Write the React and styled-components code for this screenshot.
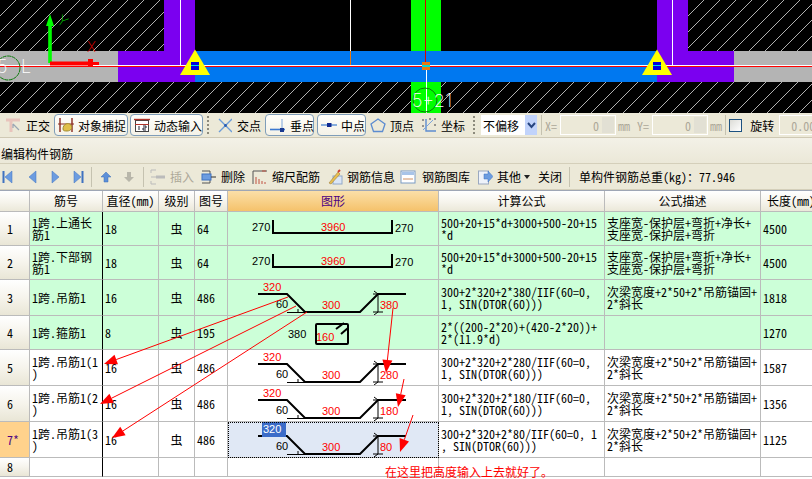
import React from "react";
import styled, { createGlobalStyle } from "styled-components";

const FONT = `"Noto Sans Mono CJK SC", "Noto Sans CJK SC", "Liberation Mono", monospace`;

const Global = createGlobalStyle`
  html, body { margin: 0; padding: 0; background: #fff; }
  body { font-family: ${FONT}; font-size: 12px; color: #000; }
`;

const Page = styled.div`
  position: relative;
  width: 812px;
  height: 479px;
  overflow: hidden;
  background: #fff;
`;

const CanvasSvg = styled.svg`
  display: block;
  width: 812px;
  height: 113px;
  background: #000;
`;

const CadLabel = styled.text`
  font-family: Inter, "Liberation Sans", sans-serif;
  font-weight: 200;
  font-size: 18px;
  fill: #fff;
`;

const AxisLabel = styled.text`
  font-family: Inter, "Liberation Sans", sans-serif;
  font-weight: 200;
  font-size: 14px;
  fill: ${(p) => p.$c};
`;

const Bar = styled.div`
  display: flex;
  align-items: center;
  height: ${(p) => p.$h}px;
  box-sizing: border-box;
  background: #ece9d8;
  border-bottom: 1px solid ${(p) => p.$line || "#d8d2bd"};
  white-space: nowrap;
  overflow: hidden;
`;

const TitleBar = styled(Bar)`
  background: linear-gradient(#f3f1e7, #ebe8d8);
  padding: 6px 0 0 1px;
  font-size: 12px;
`;

const Tool = styled.div`
  display: flex;
  flex: none;
  align-items: center;
  gap: ${(p) => p.$gap ?? 5}px;
  margin-left: ${(p) => p.$ml || 0}px;
  color: ${(p) => (p.$off ? "#aca899" : "#000")};
`;

const Toggle = styled.div`
  display: flex;
  flex: none;
  align-items: center;
  gap: 4px;
  box-sizing: border-box;
  width: ${(p) => p.$w}px;
  height: 22px;
  margin-left: ${(p) => p.$ml || 0}px;
  padding-left: 3px;
  background: linear-gradient(#fffefa, #f4f2e8);
  border: 1px solid #7f9db9;
  border-radius: 4px;
`;

const Grip = styled.div`
  flex: none;
  width: 2px;
  height: 19px;
  margin-left: ${(p) => p.$ml || 0}px;
  background-image: repeating-linear-gradient(#8c8a7c 0 2px, transparent 2px 4px);
`;

const Sep = styled.div`
  flex: none;
  width: 1px;
  height: 20px;
  margin-left: ${(p) => p.$ml || 0}px;
  background: #c5c2b0;
`;

const Select = styled.div`
  display: flex;
  flex: none;
  justify-content: space-between;
  align-items: center;
  box-sizing: border-box;
  width: 56px;
  height: 20px;
  margin-left: ${(p) => p.$ml}px;
  padding-left: 2px;
  background: #fff;
`;

const SelectBtn = styled.div`
  display: flex;
  align-items: center;
  justify-content: center;
  width: 12px;
  height: 20px;
  background: #c1d3fb;
`;

const Faint = styled.span`
  flex: none;
  margin-left: ${(p) => p.$ml || 0}px;
  color: #aca899;
`;

const Spin = styled.div`
  display: flex;
  flex: none;
  justify-content: flex-end;
  align-items: center;
  box-sizing: border-box;
  width: ${(p) => p.$w}px;
  height: 20px;
  margin-left: ${(p) => p.$ml || 0}px;
  padding-right: 1px;
  gap: 3px;
  color: #aca899;
  background: #ece9d8;
  border: 1px solid #fff;
`;

const SpinBtn = styled.div`
  width: 12px;
  height: 16px;
  background: #e2e0d4;
`;

const Check = styled.div`
  flex: none;
  box-sizing: border-box;
  width: 13px;
  height: 13px;
  margin-left: ${(p) => p.$ml}px;
  border: 1px solid #1c5180;
  background: linear-gradient(135deg, #dcdcd7, #fff);
`;

const Sheet = styled.div`
  border-top: 1px solid #9ea6b5;
`;

const Row = styled.div`
  display: grid;
  grid-template-columns: 30px 73px 56px 36px 33px 211px 166px 156px 61px;
  height: ${(p) => p.$h}px;
  background: ${(p) => p.$bg || "#fff"};
`;

const Cell = styled.div`
  display: flex;
  align-items: center;
  justify-content: ${(p) => (p.$center ? "center" : "flex-start")};
  box-sizing: border-box;
  min-width: 0;
  padding-left: ${(p) => (p.$center ? 0 : 2)}px;
  border-right: 1px solid #bbb;
  border-bottom: 1px solid #bbb;
  white-space: pre;
  line-height: 12px;
  overflow: hidden;
`;

const NameCell = styled(Cell)`
  border-right-color: #000;
`;

const HeadCell = styled(Cell)`
  justify-content: center;
  padding: 0;
  background: linear-gradient(#fff, #f6f4ec 55%, #ebe8d9);
`;

const HeadShape = styled(HeadCell)`
  color: #4b0082;
  background: linear-gradient(#fbdfa8, #f5c26b);
`;

const RowHead = styled(Cell)`
  padding-left: 7px;
  color: ${(p) => (p.$sel ? "#4b0082" : "#000")};
  background: ${(p) => (p.$sel ? "#ffd28c" : "linear-gradient(#fff, #f6f4ec 50%, #e9e6d6)")};
`;

const ShapeCell = styled(Cell)`
  padding: 0;
  align-items: flex-start;
  background: ${(p) => (p.$sel ? "#e0e8f5" : "transparent")};
  outline: ${(p) => (p.$sel ? "1px dotted #000" : "none")};
  outline-offset: -1px;
`;

const Figure = styled.svg`
  display: block;
  flex: none;
  font-family: "Liberation Sans", sans-serif;
  font-size: 11px;
`;

const Overlay = styled.svg`
  position: absolute;
  left: 0;
  top: 0;
  width: 812px;
  height: 479px;
  pointer-events: none;
`;

const Note = styled.div`
  position: absolute;
  left: 385px;
  top: 465px;
  color: #f00;
  white-space: nowrap;
  line-height: 14px;
`;

const Ico = ({ w = 16, h = 16, children }) => (
  <svg width={w} height={h} viewBox={`0 0 ${w} ${h}`} style={{ flex: "none", display: "block" }}>
    {children}
  </svg>
);

const hatchOk = "url(#hatch)";

function Canvas() {
  return (
    <CanvasSvg viewBox="0 0 812 113">
      <defs>
        <pattern id="hatch" width="16" height="16" patternUnits="userSpaceOnUse">
          <path d="M-2 2 L2 -2 M0 16 L16 0 M14 18 L18 14" stroke="#c4c4c4" strokeWidth="0.9" />
        </pattern>
      </defs>
      <rect x="0" y="0" width="164" height="51" fill={hatchOk} />
      <rect x="688" y="0" width="124" height="51" fill={hatchOk} />
      <rect x="0" y="82" width="812" height="31" fill={hatchOk} />
      <rect x="411" y="0" width="30" height="113" fill="#0f0" />
      <rect x="0" y="51" width="118" height="31" fill="#b4b4b4" />
      <rect x="734" y="51" width="78" height="31" fill="#b4b4b4" />
      <path d="M164 0H195V82H118V51H164Z" fill="#7b00f0" />
      <path d="M657 0H688V51H734V82H657Z" fill="#7b00f0" />
      <rect x="195" y="51" width="462" height="31" fill="#0078f0" />
      <path d="M180.5 0V65M350.5 0V51M672.5 0V65M426.5 66V113" stroke="#fff" strokeWidth="1" />
      <path d="M350.5 51V65" stroke="#e87810" strokeWidth="1" />
      <path d="M0 65.5H812" stroke="#fff" strokeWidth="1" />
      <path d="M0 66.5H812" stroke="#f00" strokeWidth="1.2" />
      <path d="M425.5 0V62" stroke="#d00" strokeWidth="1" />
      <rect x="422" y="62" width="8" height="8" fill="#e87810" />
      <rect x="422" y="65" width="8" height="2" fill="#00d8d8" />
      <polygon points="195,49.5 180,75 210,75" fill="#ff0" />
      <polygon points="657,49.5 642,75 672,75" fill="#ff0" />
      <rect x="191" y="62" width="8" height="8" fill="#0000e0" />
      <rect x="653" y="62" width="8" height="8" fill="#0000e0" />
      <path d="M191 65.5H199M653 65.5H661" stroke="#00e0e0" strokeWidth="1" />
      <rect x="48.2" y="24" width="3.6" height="39" fill="#0f0" />
      <polygon points="50,14 46,26 54,26" fill="#0f0" />
      <polygon points="50,61.5 88,61.5 88,59 93,59 93,62 99,62 99,65 93,65 93,67 88,67 88,65.5 50,65.5" fill="#f00" />
      <AxisLabel x="58" y="26" $c="#00d000" transform="rotate(35 63 21)">Y</AxisLabel>
      <AxisLabel x="87" y="52" $c="#e00000">X</AxisLabel>
      <circle cx="8" cy="68" r="12" fill="none" stroke="#0a7a0a" strokeWidth="1" strokeDasharray="4 0.6" />
      <circle cx="425" cy="100" r="12" fill="none" stroke="#0a7a0a" strokeWidth="1" />
      <CadLabel x="-3" y="72.5">5</CadLabel>
      <CadLabel x="21" y="72.5">L</CadLabel>
      <CadLabel x="412" y="106.5" textLength="40">5+21</CadLabel>
    </CanvasSvg>
  );
}

function Toolbar() {
  return (
    <Bar $h={25} $line="#cfc9b4">
      <Tool $ml={5}>
        <Ico>
          <path d="M1 3H15M6 3V15" stroke="#e8c4bc" strokeWidth="3" />
          <path d="M8 7L14 13M8 7V11" stroke="#9aa6b4" strokeWidth="1.2" />
        </Ico>
        正交
      </Tool>
      <Toggle $w={74} $ml={4}>
        <Ico>
          <path d="M2 1V15M14 1V15" stroke="#8a2a1e" strokeWidth="1.4" />
          <path d="M0 7H16" stroke="#8a2a1e" />
          <path d="M5 12C5 7 10 5 13 8C15 11 13 14 9 14C7 14 5 14 5 12Z" fill="#e0c04a" stroke="#a08a30" />
        </Ico>
        对象捕捉
      </Toggle>
      <Toggle $w={73} $ml={2}>
        <Ico>
          <rect x="1.5" y="3.5" width="13" height="11" fill="#fff" stroke="#444" />
          <path d="M0 2.5H16" stroke="#b0332a" strokeWidth="1.4" />
          <path d="M1 7.5H15" stroke="#b0332a" />
          <path d="M5 9V13M9 9H12V11H9V13H12" stroke="#223" fill="none" />
        </Ico>
        动态输入
      </Toggle>
      <Grip $ml={4} />
      <Tool $ml={9}>
        <Ico w={14}>
          <path d="M1 2L14 15M14 2L1 15" stroke="#6c9cd8" strokeWidth="1.4" />
          <circle cx="7.5" cy="8.5" r="1.4" fill="#2a5cb0" />
        </Ico>
        交点
      </Tool>
      <Toggle $w={49} $ml={4}>
        <Ico w={17}>
          <path d="M1 12.5H16" stroke="#3c78d0" strokeWidth="1.6" />
          <path d="M13 2V15" stroke="#7aa4dc" />
          <rect x="11" y="11" width="4" height="4" fill="#1a3a90" />
        </Ico>
        垂点
      </Toggle>
      <Toggle $w={49} $ml={3}>
        <Ico>
          <path d="M0 8H16" stroke="#6c9cd8" strokeWidth="1.6" />
          <rect x="6" y="6" width="4.5" height="4" fill="#102a90" />
        </Ico>
        中点
      </Toggle>
      <Tool $ml={4} $gap={4}>
        <Ico>
          <polygon points="8,2 15,7 12.5,14.5 3.5,14.5 1,7" fill="none" stroke="#5c8cd0" strokeWidth="1.3" />
        </Ico>
        顶点
      </Tool>
      <Tool $ml={7} $gap={4}>
        <Ico>
          <path d="M5 2V14H15" stroke="#5c8cd0" strokeWidth="1.4" fill="none" />
          <path d="M2 13L12 3" stroke="#7aa4dc" />
          <path d="M1 3H3M8 2H10M13 2H15M1 9H3M13 8H15" stroke="#777" strokeWidth="1.5" />
        </Ico>
        坐标
      </Tool>
      <Grip $ml={8} />
      <Select $ml={6}>
        不偏移
        <SelectBtn>
          <Ico w={9} h={7}>
            <path d="M1 1L4.5 5L8 1" fill="none" stroke="#27457f" strokeWidth="2" />
          </Ico>
        </SelectBtn>
      </Select>
      <Sep $ml={4} />
      <Faint $ml={3}>X=</Faint>
      <Spin $w={56} $ml={3}>
        0<SpinBtn />
      </Spin>
      <Faint $ml={2}>mm</Faint>
      <Faint $ml={7}>Y=</Faint>
      <Spin $w={56} $ml={3}>
        0<SpinBtn />
      </Spin>
      <Faint $ml={2}>mm</Faint>
      <Sep $ml={3} />
      <Check $ml={3} />
      <Tool $ml={8}>旋转</Tool>
      <Spin $w={50} $ml={5}>
        0.0000
      </Spin>
    </Bar>
  );
}

const Nav = ({ last, first, flip }) => (
  <Ico w={11} h={14}>
    <g transform={flip ? "translate(11 0) scale(-1 1)" : undefined}>
      <polygon points={first ? "10,1 3,7 10,13" : "9,1 2,7 9,13"} fill="#6c9ce0" stroke="#3f72c0" strokeWidth="0.5" />
      {last && <rect x="0.5" y="1" width="2" height="12" fill="#3f72c0" />}
    </g>
  </Ico>
);

function Editbar() {
  return (
    <Bar $h={26} $line="#d4cfba">
      <Tool $ml={2} $gap={0}>
        <Nav last first />
      </Tool>
      <Tool $ml={14} $gap={0}>
        <Nav />
      </Tool>
      <Tool $ml={12} $gap={0}>
        <Nav flip />
      </Tool>
      <Tool $ml={12} $gap={0}>
        <Nav last first flip />
      </Tool>
      <Sep $ml={7} />
      <Tool $ml={8} $gap={0}>
        <Ico w={12} h={12}>
          <path d="M6 1L11 6H8V11H4V6H1Z" fill="#5c8fd8" stroke="#3a6cb8" strokeWidth="0.5" />
        </Ico>
      </Tool>
      <Tool $ml={11} $gap={0}>
        <Ico w={12} h={12}>
          <path d="M6 11L11 6H8V1H4V6H1Z" fill="#b8b6aa" />
        </Ico>
      </Tool>
      <Sep $ml={8} />
      <Tool $ml={6} $gap={4} $off>
        <Ico>
          <path d="M1 1H6M1 8H6M1 15H6M1 1V4M1 12V15" stroke="#bbb" fill="none" />
          <path d="M6 8H15" stroke="#bbb" strokeWidth="3" />
        </Ico>
        插入
      </Tool>
      <Tool $ml={7} $gap={4}>
        <Ico>
          <path d="M1 2H9M1 14H9M9 2V5M9 11V14" stroke="#555" fill="none" />
          <rect x="1" y="5" width="9" height="6" fill="#6c9ce0" stroke="#3f72c0" />
          <path d="M10 8H15" stroke="#333" />
        </Ico>
        删除
      </Tool>
      <Tool $ml={7} $gap={4}>
        <Ico>
          <path d="M1 15V2H15" stroke="#555" fill="none" />
          <path d="M10 2L14 2M4 15V8M7 15V10M10 15V12M13 15V13" stroke="#c05040" />
        </Ico>
        缩尺配筋
      </Tool>
      <Tool $ml={7} $gap={4}>
        <Ico>
          <rect x="6" y="7" width="9" height="8" fill="#dbe6f6" stroke="#90a8c8" />
          <path d="M2 14L11 3L13 5L4 15Z" fill="#e8c050" stroke="#a08040" strokeWidth="0.6" />
          <path d="M11 3L13 1" stroke="#d04030" strokeWidth="2" />
        </Ico>
        钢筋信息
      </Tool>
      <Tool $ml={5} $gap={6}>
        <Ico>
          <rect x="1" y="2" width="14" height="12" fill="#fff" stroke="#7a9cc4" />
          <rect x="2" y="3" width="12" height="3" fill="#a8c4e8" />
          <path d="M3 10H13" stroke="#d09060" />
        </Ico>
        钢筋图库
      </Tool>
      <Tool $ml={7} $gap={4}>
        <Ico>
          <rect x="1.5" y="2" width="10" height="13" fill="#eef2fa" stroke="#9aa8c0" />
          <path d="M7 5H11V2L16 7.5L11 13V10H7Z" fill="#6c9ce0" stroke="#3f72c0" strokeWidth="0.5" />
        </Ico>
        其他
      </Tool>
      <Tool $ml={3} $gap={0}>
        <Ico w={6} h={4}>
          <polygon points="0,0 6,0 3,4" fill="#222" />
        </Ico>
      </Tool>
      <Tool $ml={8}>关闭</Tool>
      <Sep $ml={7} />
      <Tool $ml={9}>单构件钢筋总重(kg)：77.946</Tool>
    </Bar>
  );
}

function Rod({ left, mid, right }) {
  return (
    <Figure width="210" height="33" viewBox="1 0 210 33">
      <path d="M46 8V21H165V8" fill="none" stroke="#000" strokeWidth="2" />
      <text x="25" y="19">{left}</text>
      <text x="94" y="19" fill="#f00">{mid}</text>
      <text x="168" y="20">{right}</text>
    </Figure>
  );
}

function Stirrup() {
  return (
    <Figure width="210" height="33" viewBox="1 0 210 33">
      <rect x="89" y="8" width="32" height="20" fill="none" stroke="#000" strokeWidth="2" rx="1" />
      <path d="M109 13L117 7M114 18L121 12" stroke="#000" strokeWidth="2" />
      <text x="61" y="22">380</text>
      <text x="89" y="25" fill="#f00">160</text>
    </Figure>
  );
}

function Hanger({ value, sel }) {
  return (
    <Figure width="210" height="35" viewBox="1 0 210 35">
      <path d="M31 14H60L78 32H133L151 14H179" fill="none" stroke="#000" strokeWidth="2" />
      <path d="M60 32.5H78M71 29V32M146 14H156M146 32H156M151 14V32M147 11L151 14M147 35L151 32" stroke="#000" strokeWidth="1" fill="none" />
      {sel && <rect x="35" y="0" width="24" height="15" fill="#3c6cc8" />}
      <text x="36" y="11" fill={sel ? "#fff" : "#f00"}>320</text>
      <text x="49" y="28">60</text>
      <text x="95" y="29" fill="#f00">300</text>
      <text x="153" y="29" fill="#f00">{value}</text>
    </Figure>
  );
}

const BAR = "虫";
const DESC = "次梁宽度+2*50+2*吊筋锚固+\n2*斜长";
const ROWS = [
  { h: 34, bg: "#ccffd8", id: "1", name: "1跨.上通长\n筋1", dia: "18", no: "64", shape: <Rod left="270" mid="3960" right="270" />, f: "500+20+15*d+3000+500-20+15\n*d", d: "支座宽-保护层+弯折+净长+\n支座宽-保护层+弯折", len: "4500" },
  { h: 34, bg: "#ccffd8", id: "2", name: "1跨.下部钢\n筋1", dia: "18", no: "64", shape: <Rod left="270" mid="3960" right="270" />, f: "500+20+15*d+3000+500-20+15\n*d", d: "支座宽-保护层+弯折+净长+\n支座宽-保护层+弯折", len: "4500" },
  { h: 36, bg: "#ccffd8", id: "3", name: "1跨.吊筋1", dia: "16", no: "486", shape: <Hanger value="380" />, f: "300+2*320+2*380/IIF(60=0,\n1, SIN(DTOR(60)))", d: DESC, len: "1818" },
  { h: 34, bg: "#ccffd8", id: "4", name: "1跨.箍筋1", dia: "8", no: "195", shape: <Stirrup />, f: "2*((200-2*20)+(420-2*20))+\n2*(11.9*d)", d: "", len: "1270" },
  { h: 36, id: "5", name: "1跨.吊筋1(1\n)", dia: "16", no: "486", shape: <Hanger value="280" />, f: "300+2*320+2*280/IIF(60=0,\n1, SIN(DTOR(60)))", d: DESC, len: "1587" },
  { h: 36, id: "6", name: "1跨.吊筋1(2\n)", dia: "16", no: "486", shape: <Hanger value="180" />, f: "300+2*320+2*180/IIF(60=0,\n1, SIN(DTOR(60)))", d: DESC, len: "1356" },
  { h: 36, id: "7*", sel: true, name: "1跨.吊筋1(3\n)", dia: "16", no: "486", shape: <Hanger value="80" sel />, f: "300+2*320+2*80/IIF(60=0, 1\n, SIN(DTOR(60)))", d: DESC, len: "1125" },
  { h: 19, id: "8", empty: true },
];

function Arrow({ from, to, size = 13, half = 5 }) {
  const dx = to[0] - from[0];
  const dy = to[1] - from[1];
  const l = Math.hypot(dx, dy);
  const ux = dx / l;
  const uy = dy / l;
  const bx = to[0] - ux * size;
  const by = to[1] - uy * size;
  const pts = [to, [bx - uy * half, by + ux * half], [bx + uy * half, by - ux * half]];
  return (
    <g>
      <line x1={from[0]} y1={from[1]} x2={bx} y2={by} stroke="#f00" strokeWidth="1" />
      <polygon points={pts.map((p) => p.join(",")).join(" ")} fill="#f00" />
    </g>
  );
}

export default function App() {
  return (
    <Page>
      <Global />
      <Canvas />
      <Toolbar />
      <TitleBar $h={26} $line="#d4cfba">编辑构件钢筋</TitleBar>
      <Editbar />
      <Sheet>
        <Row $h={21}>
          <HeadCell />
          <HeadCell>筋号</HeadCell>
          <HeadCell>直径(mm)</HeadCell>
          <HeadCell>级别</HeadCell>
          <HeadCell>图号</HeadCell>
          <HeadShape>图形</HeadShape>
          <HeadCell>计算公式</HeadCell>
          <HeadCell>公式描述</HeadCell>
          <HeadCell>长度(mm)</HeadCell>
        </Row>
        {ROWS.map((r) => (
          <Row key={r.id} $h={r.h} $bg={r.bg}>
            <RowHead $sel={r.sel}>{r.id}</RowHead>
            <NameCell>{r.name}</NameCell>
            <Cell>{r.dia}</Cell>
            <Cell $center>{r.empty ? "" : BAR}</Cell>
            <Cell>{r.no}</Cell>
            <ShapeCell $sel={r.sel}>{r.shape}</ShapeCell>
            <Cell>{r.f}</Cell>
            <Cell>{r.d}</Cell>
            <Cell>{r.len}</Cell>
          </Row>
        ))}
      </Sheet>
      <Overlay viewBox="0 0 812 479">
        <Arrow from={[288, 297]} to={[104, 364]} />
        <Arrow from={[296, 306]} to={[100, 404]} />
        <Arrow from={[307, 312]} to={[112, 438]} />
        <Arrow from={[393, 308]} to={[386, 373]} />
        <Arrow from={[404, 379]} to={[398, 407]} />
        <Arrow from={[413, 415]} to={[400, 452]} />
      </Overlay>
      <Note>在这里把高度输入上去就好了。</Note>
    </Page>
  );
}
